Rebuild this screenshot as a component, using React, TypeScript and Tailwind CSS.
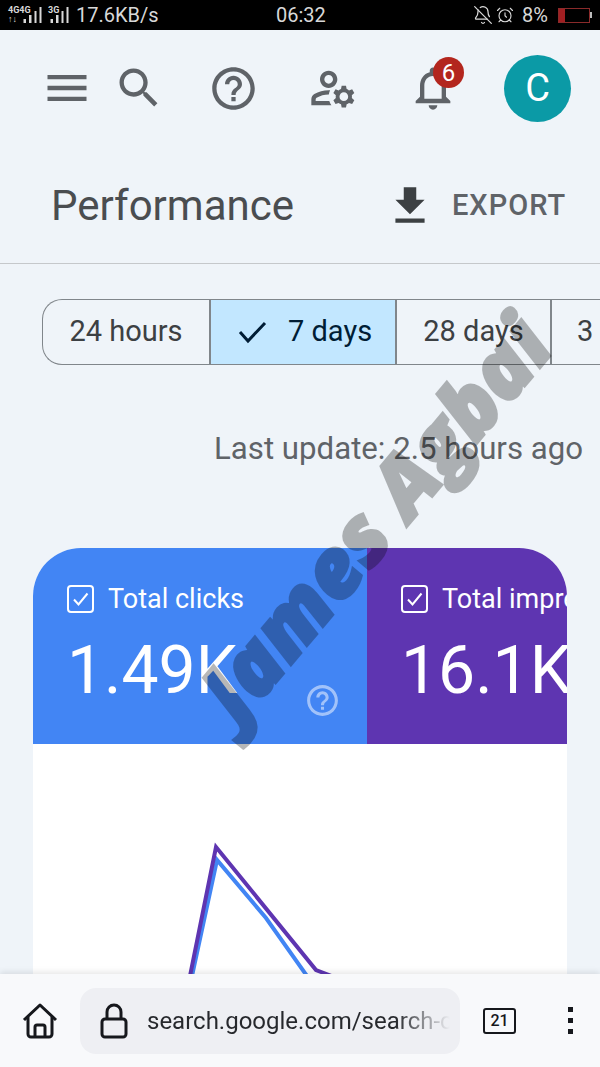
import React from "react";
import { AlarmClock, BellOff } from "lucide-react";

const paths = {
  menu: "M3 18h18v-2H3v2zm0-5h18v-2H3v2zm0-7v2h18V6H3z",
  search: "M15.5 14h-.79l-.28-.27C15.41 12.59 16 11.11 16 9.5 16 5.91 13.09 3 9.5 3S3 5.91 3 9.5 5.91 16 9.5 16c1.61 0 3.09-.59 4.23-1.57l.27.28v.79l5 4.99L20.49 19l-4.99-5zm-6 0C7.01 14 5 11.99 5 9.5S7.01 5 9.5 5 14 7.01 14 9.5 11.99 14 9.5 14z",
  help: "M11 18h2v-2h-2v2zm1-16C6.48 2 2 6.48 2 12s4.48 10 10 10 10-4.48 10-10S17.52 2 12 2zm0 18c-4.41 0-8-3.59-8-8s3.59-8 8-8 8 3.59 8 8-3.59 8-8 8zm0-14c-2.21 0-4 1.79-4 4h2c0-1.1.9-2 2-2s2 .9 2 2c0 2-3 1.75-3 5h2c0-2.25 3-2.5 3-5 0-2.21-1.79-4-4-4z",
  bell: "M12 22c1.1 0 2-.9 2-2h-4c0 1.1.9 2 2 2zm6-6v-5c0-3.07-1.63-5.64-4.5-6.32V4c0-.83-.67-1.5-1.5-1.5s-1.5.67-1.5 1.5v.68C7.64 5.36 6 7.92 6 11v5l-2 2v1h16v-1l-2-2zm-2 1H8v-6c0-2.48 1.51-4.5 4-4.5s4 2.02 4 4.5v6z",
  manage: "M4 18v-.65c0-.34.16-.66.41-.81C6.1 15.53 8.03 15 10 15c.03 0 .05 0 .08.01.1-.7.3-1.37.59-1.98-.22-.02-.44-.03-.67-.03-2.42 0-4.68.67-6.61 1.82-.88.52-1.39 1.5-1.39 2.53V20h9.26c-.42-.6-.75-1.28-.97-2H4zM10 12c2.21 0 4-1.79 4-4s-1.79-4-4-4-4 1.79-4 4 1.79 4 4 4zm0-6c1.1 0 2 .9 2 2s-.9 2-2 2-2-.9-2-2 .9-2 2-2zM20.75 16c0-.22-.03-.42-.06-.63l1.14-1.01-1-1.73-1.45.49c-.32-.27-.68-.48-1.08-.63L18 11h-2l-.3 1.49c-.4.15-.76.36-1.08.63l-1.45-.49-1 1.73 1.14 1.01c-.03.21-.06.41-.06.63s.03.42.06.63l-1.14 1.01 1 1.73 1.45-.49c.32.27.68.48 1.08.63L16 21h2l.3-1.49c.4-.15.76-.36 1.08-.63l1.45.49 1-1.73-1.14-1.01c.03-.21.06-.41.06-.63zM17 18c-1.1 0-2-.9-2-2s.9-2 2-2 2 .9 2 2-.9 2-2 2z",
  download: "M19 9h-4V3H9v6H5l7 7 7-7zM5 18v2h14v-2H5z",
};

function M({ d, className }: { d: string; className: string }) {
  return (
    <svg viewBox="0 0 24 24" fill="currentColor" className={className}>
      <path d={d} />
    </svg>
  );
}

function Bars({ className }: { className: string }) {
  return (
    <svg viewBox="0 0 18 16" fill="#d8d8d8" className={className}>
      <rect x="0" y="12" width="2.5" height="4" />
      <rect x="5.5" y="8" width="2.5" height="8" />
      <rect x="11" y="4" width="2" height="12" />
      <rect x="16" y="0" width="2" height="16" />
    </svg>
  );
}

function Check({ className }: { className: string }) {
  return (
    <svg viewBox="0 0 27 28" fill="none" stroke="white" className={className}>
      <rect x="1" y="1" width="25" height="26" rx="3" strokeWidth="2" />
      <path d="M7 14.5l4.5 5L20.5 8.5" strokeWidth="2" />
    </svg>
  );
}

function Metric({ label, value, bg, w, help }: { label: string; value: string; bg: string; w: string; help?: boolean }) {
  return (
    <div className={`${bg} ${w} relative h-full shrink-0 overflow-hidden pl-[34px] pt-[37px] text-white`}>
      <div className="flex h-[28px] items-center gap-[14px] whitespace-nowrap text-[27px] leading-[28px]">
        <Check className="h-[28px] w-[27px] shrink-0" />
        <span>{label}</span>
      </div>
      <div className="mt-[20px] whitespace-nowrap text-[66px] leading-[76px]">{value}</div>
      {help && (
        <M d={paths.help} className="absolute left-[271px] top-[134px] size-[37px] text-white/50" />
      )}
    </div>
  );
}

export default function App() {
  return (
    <div className="relative flex h-[1067px] w-[600px] flex-col overflow-hidden bg-[#eff4f9] font-['Roboto',sans-serif]">
      {/* status bar */}
      <div className="flex h-[30px] shrink-0 items-center bg-black pl-[8px] pr-[8px] text-[20px] leading-[30px] text-[#d8d8d8]">
        <div className="flex w-[269px] items-center">
          <span className="flex w-[15px] flex-col whitespace-nowrap text-[9px] font-bold leading-[9px]">
            <span>4G4G</span>
            <span>↑↓</span>
          </span>
          <Bars className="h-[16px] w-[19px] shrink-0" />
          <span className="ml-[6px] mt-[6px] w-[2px] self-start whitespace-nowrap text-[9px] font-bold leading-[9px]">3G</span>
          <Bars className="h-[16px] w-[19px] shrink-0" />
          <span className="ml-[7px]">17.6KB/s</span>
        </div>
        <span className="ml-[-1px]">06:32</span>
        <div className="ml-auto flex items-center">
          <BellOff className="size-[20px]" strokeWidth={1.5} />
          <AlarmClock className="ml-[3px] size-[18px]" strokeWidth={1.5} />
          <span className="ml-[8px]">8%</span>
          <span className="relative ml-[10px] flex h-[15px] w-[32px] items-center border border-[#8a2a2a] bg-black">
            <span className="h-full w-[6px] bg-[#a11f22]" />
          </span>
          <span className="h-[6px] w-[2px] bg-[#bbb]" />
        </div>
      </div>

      {/* top icons */}
      <div className="flex h-[116px] shrink-0 items-center pl-[41px] text-[#5f6368]">
        <M d={paths.menu} className="size-[52px]" />
        <M d={paths.search} className="ml-[20px] size-[52px]" />
        <M d={paths.help} className="ml-[43px] size-[51px]" />
        <M d={paths.manage} className="ml-[48px] size-[52px]" />
        <div className="relative ml-[48px] size-[52px]">
          <M d={paths.bell} className="size-[52px]" />
          <span className="absolute left-[26px] top-[-5px] flex size-[31px] items-center justify-center rounded-full bg-[#b3261e] text-[24px] leading-none text-white">
            6
          </span>
        </div>
        <div className="ml-[45px] flex h-[67px] w-[67px] items-center justify-center rounded-full bg-[#0b9aa6] text-[38px] text-white">
          C
        </div>
      </div>

      {/* title */}
      <div className="flex h-[118px] shrink-0 items-center border-b border-[#c5c8cb] pl-[51px] pt-[2px]">
        <h1 className="text-[42px] font-normal leading-none text-[#4a4d50]">Performance</h1>
        <M d={paths.download} className="ml-[91px] size-[50px] text-[#3c4043]" />
        <span className="ml-[17px] text-[29px] font-medium leading-none tracking-[1px] text-[#5f6368]">EXPORT</span>
      </div>

      {/* chips */}
      <div className="ml-[42px] mt-[35px] flex h-[66px] shrink-0 overflow-hidden rounded-l-[20px] border border-r-0 border-[#80868b] text-[29px] text-[#3c4043]">
        <div className="flex w-[166px] shrink-0 items-center justify-center">24 hours</div>
        <div className="flex w-[188px] shrink-0 items-center gap-[20px] border-x-2 border-[#80868b] bg-[#c2e7ff] pl-[27px] text-[#001d35]">
          <svg viewBox="0 0 30 24" fill="none" stroke="currentColor" strokeWidth="3" className="h-[24px] w-[30px]">
            <path d="M2 12l8 9L27 3" />
          </svg>
          <span>7 days</span>
        </div>
        <div className="flex w-[153px] shrink-0 items-center justify-center">28 days</div>
        <div className="flex shrink-0 items-center whitespace-nowrap border-l-2 border-[#80868b] pl-[25px]">3 months</div>
      </div>

      {/* last update */}
      <div className="mt-[66px] shrink-0 pr-[17px] text-right text-[31.2px] leading-[36px] text-[#5f6368]">
        Last update: 2.5 hours ago
      </div>

      {/* card */}
      <div className="ml-[33px] mt-[81px] flex min-h-0 w-[534px] flex-1 flex-col overflow-hidden rounded-t-[48px] bg-white">
        <div className="flex h-[196px] shrink-0 overflow-hidden">
          <Metric label="Total clicks" value="1.49K" bg="bg-[#4285f4]" w="w-[334px]" help />
          <Metric label="Total impressions" value="16.1K" bg="bg-[#5e35b1]" w="w-[200px]" />
        </div>
        <svg viewBox="33 744 534 230" fill="none" strokeWidth="4" className="h-[230px] w-[534px] shrink-0">
          <polyline points="192,976 217,860 266,918 307,976" stroke="#4285f4" />
          <polyline points="190,976 216,847 316,970 334,977" stroke="#5e35b1" />
        </svg>
      </div>

      {/* browser bar */}
      <div className="flex h-[93px] shrink-0 items-center bg-[#f8f9fb] shadow-[0_-2px_6px_rgba(0,0,0,0.1)]">
        <svg viewBox="0 0 36 36" fill="none" stroke="#16181c" strokeWidth="3" strokeLinejoin="round" className="ml-[22px] size-[36px] shrink-0">
          <path d="M2 17L18 2l16 15" />
          <path d="M6 14v17a3 3 0 0 0 3 3h18a3 3 0 0 0 3-3V14" />
          <path d="M13 34V24a2 2 0 0 1 2-2h6a2 2 0 0 1 2 2v10" />
        </svg>
        <div className="ml-[22px] flex h-[66px] w-[380px] shrink-0 items-center overflow-hidden rounded-[16px] bg-[#eeeff3] pl-[20px]">
          <svg viewBox="0 0 28 36" fill="none" stroke="#16181c" strokeWidth="3" className="h-[36px] w-[28px] shrink-0">
            <path d="M7 16V9a7 7 0 0 1 14 0v7" />
            <rect x="2" y="16" width="24" height="18" rx="3" />
          </svg>
          <span className="ml-[19px] w-[303px] shrink-0 overflow-hidden whitespace-nowrap bg-[linear-gradient(90deg,#26282c_82%,#eeeff3_100%)] bg-clip-text text-[24px] leading-[34px] text-transparent">
            search.google.com/search-console
          </span>
        </div>
        <span className="ml-[23px] flex h-[26px] w-[33px] shrink-0 items-center justify-center rounded-[3px] border-2 border-[#16181c] text-[16px] font-medium leading-none text-[#16181c]">
          21
        </span>
        <div className="ml-[52px] flex h-[27px] w-[5px] shrink-0 flex-col justify-between">
          <span className="size-[5px] bg-[#16181c]" />
          <span className="size-[5px] bg-[#16181c]" />
          <span className="size-[5px] bg-[#16181c]" />
        </div>
      </div>

      {/* watermark */}
      <div className="pointer-events-none absolute left-[373px] top-[517px] -translate-x-1/2 -translate-y-1/2 -rotate-[50deg] whitespace-nowrap font-['Open_Sans',sans-serif] text-[82px] font-extrabold italic leading-none text-black opacity-[0.28] [-webkit-text-stroke:3px_black]">
        James Agbai
      </div>
    </div>
  );
}
